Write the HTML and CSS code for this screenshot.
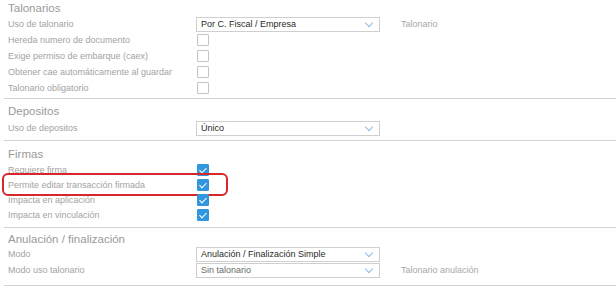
FILE: index.html
```html
<!DOCTYPE html>
<html lang="es">
<head>
  <meta charset="UTF-8" />
  <title>Configuración de transacción</title>
  <link rel="stylesheet" href="styles.css">
</head>
<body>
  <div class="form">

    <!-- Talonarios -->
    <div class="section sec-talonarios">
      <h3>Talonarios</h3>
      <div class="row">
        <label>Uso de talonario</label>
        <div class="select"><span>Por C. Fiscal / Empresa</span><i class="chev"></i></div>
        <span class="extra">Talonario</span>
      </div>
      <div class="row">
        <label>Hereda numero de documento</label>
        <span class="check"></span>
      </div>
      <div class="row">
        <label>Exige permiso de embarque (caex)</label>
        <span class="check"></span>
      </div>
      <div class="row">
        <label>Obtener cae automáticamente al guardar</label>
        <span class="check"></span>
      </div>
      <div class="row">
        <label>Talonario obligatorio</label>
        <span class="check"></span>
      </div>
    </div>

    <!-- Depositos -->
    <div class="section sec-depositos">
      <h3>Depositos</h3>
      <div class="row">
        <label>Uso de depositos</label>
        <div class="select"><span>Único</span><i class="chev"></i></div>
      </div>
    </div>

    <!-- Firmas -->
    <div class="section sec-firmas">
      <h3>Firmas</h3>
      <div class="row">
        <label>Requiere firma</label>
        <span class="check on"></span>
      </div>
      <div class="row marked">
        <label>Permite editar transacción firmada</label>
        <span class="check on"></span>
        <div class="highlight"></div>
      </div>
      <div class="row">
        <label>Impacta en aplicación</label>
        <span class="check on"></span>
      </div>
      <div class="row">
        <label>Impacta en vinculación</label>
        <span class="check on"></span>
      </div>
    </div>

    <!-- Anulación -->
    <div class="section sec-anulacion">
      <h3>Anulación / finalización</h3>
      <div class="row">
        <label>Modo</label>
        <div class="select"><span>Anulación / Finalización Simple</span><i class="chev"></i></div>
      </div>
      <div class="row">
        <label>Modo uso talonario</label>
        <div class="select light"><span>Sin talonario</span><i class="chev"></i></div>
        <span class="extra">Talonario anulación</span>
      </div>
    </div>

  </div>
</body>
</html>
```

FILE: styles.css
```css
* {
  margin: 0;
  padding: 0;
  box-sizing: border-box;
}

html, body {
  background: #fff;
  font-family: 'Liberation Sans', Arial, sans-serif;
  color: #a0a0a0;
}

.form {
  padding-left: 4px;
}

.section {
  padding-left: 4px;
  border-bottom: 1px solid #d4d4d4;
}

.section h3 {
  font-size: 11.5px;
  font-weight: normal;
  line-height: 14px;
  color: #9a9a9a;
}

.sec-talonarios { padding-top: 1px; padding-bottom: 2px; }
.sec-talonarios .row:first-of-type { margin-top: 1px; }
.sec-depositos { padding-top: 5px; padding-bottom: 4px; }
.sec-depositos .row { margin-top: 2px; }
.sec-firmas { padding-top: 6px; padding-bottom: 5px; }
.sec-firmas .row { height: 15px; }
.sec-firmas h3 { margin-bottom: 1px; }
.sec-anulacion { padding-top: 4px; padding-bottom: 7px; }

.row {
  position: relative;
  display: flex;
  align-items: center;
  height: 16px;
}

.row label {
  width: 188px;
  font-size: 9px;
  color: #a3a3a3;
}

.select {
  display: flex;
  align-items: center;
  justify-content: space-between;
  width: 184px;
  height: 15px;
  padding: 0 4px 0 4px;
  border: 1px solid #cfcfcf;
  font-size: 9px;
  color: #2a2a2a;
  background: #fff;
}

.select.light {
  color: #6a6a6a;
}

.chev {
  width: 6px;
  height: 6px;
  margin-right: 3px;
  margin-top: -3px;
  border-right: 1px solid #8fbbe8;
  border-bottom: 1px solid #8fbbe8;
  transform: rotate(45deg);
}

.extra {
  margin-left: 21px;
  font-size: 9px;
  color: #a8a8a8;
}

.check {
  width: 12px;
  height: 12px;
  margin-left: 1px;
  border: 1px solid #c4c4c4;
  border-radius: 1px;
  background: #fff;
  position: relative;
}

.check.on {
  background: #3196dc;
  border-color: #3196dc;
}

.check.on::after {
  content: "";
  position: absolute;
  left: 3px;
  top: 1px;
  width: 3px;
  height: 6px;
  border-right: 1.5px solid #fff;
  border-bottom: 1.5px solid #fff;
  transform: rotate(45deg);
}

.highlight {
  position: absolute;
  left: -6px;
  top: -4px;
  width: 226px;
  height: 23px;
  border: 2px solid #d7262c;
  border-radius: 6px;
  pointer-events: none;
}
```
